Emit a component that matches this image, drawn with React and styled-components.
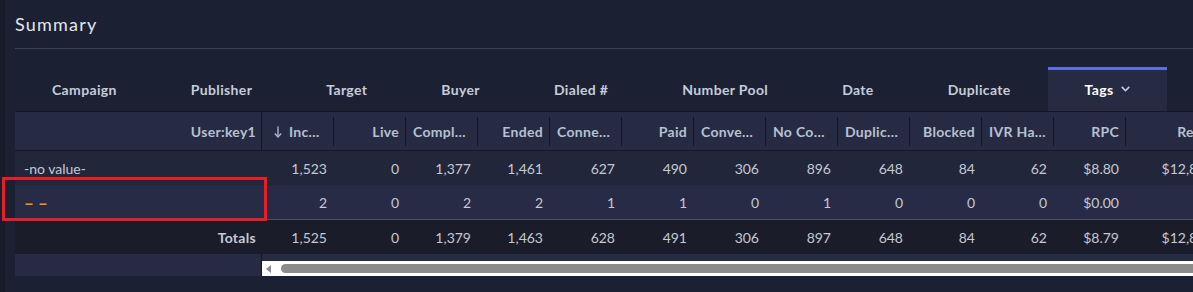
import React from 'react';
import styled, { createGlobalStyle } from 'styled-components';

const GlobalStyle = createGlobalStyle`
  html, body {
    margin: 0;
    padding: 0;
    background: #1c2033;
    overflow: hidden;
  }
  body {
    font-family: Lato, "Noto Sans", sans-serif;
    -webkit-font-smoothing: antialiased;
  }
`;

// layout
const Page = styled.div`
  position: relative;
  display: flex;
  width: 1193px;
  height: 292px;
  overflow: hidden;
  background: #1c2033;
`;

const Rail = styled.div`
  flex: 0 0 5px;
  background: #181b2a;
`;

const Main = styled.main`
  flex: 1;
  min-width: 0;
  padding-left: 10px;
`;

const Title = styled.h2`
  margin: 0;
  padding: 12px 0;
  height: 24px;
  line-height: 24px;
  font-size: 18px;
  font-weight: 400;
  letter-spacing: 1.2px;
  color: #e3e6ef;
  border-bottom: 1px solid #3a3f5d;
`;

// tabs
const Tabs = styled.nav`
  display: flex;
  margin-top: 18px;
  height: 44px;
`;

const Tab = styled.div`
  display: flex;
  align-items: center;
  gap: 7px;
  padding: 0 37px;
  font-size: 14px;
  font-weight: 700;
  letter-spacing: 0.35px;
  color: ${(p) => (p.$active ? '#ffffff' : '#c6ccd9')};
  background: ${(p) => (p.$active ? '#262a42' : 'transparent')};
  box-shadow: ${(p) => (p.$active ? 'inset 0 3px 0 #5b6fe0' : 'none')};
  white-space: nowrap;
`;

// table
const TableWrap = styled.div`
  overflow: hidden;
  border-top: 1px solid #141724;
`;

const Table = styled.div`
  width: max-content;
  font-size: 14px;
`;

const Row = styled.div`
  display: flex;
  height: ${(p) => p.$h || 34}px;
  background: ${(p) => p.$bg};
  border-top: ${(p) => (p.$topLine ? '1px solid #4a4f6c' : 'none')};
  border-bottom: ${(p) => (p.$bottomLine ? '1px solid #141724' : 'none')};
`;

const FrozenCell = styled.div`
  flex: 0 0 247px;
  box-sizing: border-box;
  display: flex;
  align-items: center;
  justify-content: ${(p) => (p.$right ? 'flex-end' : 'flex-start')};
  padding: 0 5px 0 9px;
  border-right: 1px solid ${(p) => (p.$divider ? '#141724' : 'transparent')};
  font-weight: ${(p) => (p.$bold ? 700 : 400)};
  letter-spacing: ${(p) => (p.$bold ? '0.3px' : '0')};
  color: ${(p) => p.$color || '#c5c9d4'};
  white-space: nowrap;
`;

const HeadCell = styled.div`
  flex: 0 0 ${(p) => p.$w}px;
  box-sizing: border-box;
  display: flex;
  align-items: center;
  justify-content: ${(p) => (p.$clip ? 'flex-start' : 'flex-end')};
  gap: 7px;
  margin: 5px 0 4px;
  padding: 0 6px 0 ${(p) => (p.$sorted ? 12 : 7)}px;
  border-right: 1px solid #13151f;
  font-weight: 700;
  letter-spacing: 0.3px;
  color: #b6c1d2;
  white-space: nowrap;
  overflow: hidden;
`;

const Cell = styled.div`
  flex: 0 0 ${(p) => p.$w}px;
  box-sizing: border-box;
  display: flex;
  align-items: center;
  justify-content: flex-end;
  padding-right: 7px;
  color: #c5c9d4;
  white-space: nowrap;
`;

const Dashes = styled.span`
  font-size: 17px;
  font-weight: 700;
  line-height: 1;
  color: #f7921c;
`;

const Track = styled.div`
  flex: 1;
  display: flex;
  align-items: center;
  margin-top: 7px;
  height: 15px;
  background: #ffffff;
`;

const TrackArrow = styled.span`
  margin-left: 4px;
  width: 0;
  height: 0;
  border-top: 4px solid transparent;
  border-bottom: 4px solid transparent;
  border-right: 5px solid #8b8b8b;
`;

const Thumb = styled.div`
  flex: 1;
  margin-left: 10px;
  height: 9px;
  border-radius: 5px 0 0 5px;
  background: #8b8b8b;
`;

const Annotation = styled.div`
  position: absolute;
  left: 2px;
  top: 177px;
  width: 265px;
  height: 44px;
  box-sizing: border-box;
  border: 3px solid #e61e28;
  pointer-events: none;
`;

const SortDown = () => (
  <svg width="8" height="12" viewBox="0 0 8 12" fill="none" stroke="#a9b7cc" strokeWidth="1.4">
    <path d="M4 0.5V11" />
    <path d="M0.8 7.6L4 11L7.2 7.6" />
  </svg>
);

const Chevron = () => (
  <svg width="9" height="6" viewBox="0 0 9 6" fill="none" stroke="#c2d0ea" strokeWidth="1.6">
    <path d="M0.8 0.9L4.5 4.7L8.2 0.9" />
  </svg>
);

const tabs = ['Campaign', 'Publisher', 'Target', 'Buyer', 'Dialed #', 'Number Pool', 'Date', 'Duplicate', 'Tags'];

const columns = [
  { label: 'Inc…', sorted: true, clip: true },
  { label: 'Live' },
  { label: 'Compl…', clip: true },
  { label: 'Ended' },
  { label: 'Conne…', clip: true },
  { label: 'Paid' },
  { label: 'Conve…', clip: true },
  { label: 'No Co…', clip: true },
  { label: 'Duplic…', clip: true },
  { label: 'Blocked' },
  { label: 'IVR Ha…', clip: true },
  { label: 'RPC' },
  { label: 'Revenue', w: 114 }
];

const rows = [
  {
    name: '-no value-',
    bg: '#22263b',
    values: ['1,523', '0', '1,377', '1,461', '627', '490', '306', '896', '648', '84', '62', '$8.80', '$12,858.00']
  },
  {
    name: null,
    bg: '#272b45',
    values: ['2', '0', '2', '2', '1', '1', '0', '1', '0', '0', '0', '$0.00', '']
  }
];

const totals = ['1,525', '0', '1,379', '1,463', '628', '491', '306', '897', '648', '84', '62', '$8.79', '$12,858.00'];

const App = () => {
  return (
    <>
      <GlobalStyle />
      <Page>
        <Rail />
        <Main>
          <Title>Summary</Title>
          <Tabs>
            {tabs.map((t) => (
              <Tab key={t} $active={t === 'Tags'}>
                {t}
                {t === 'Tags' && <Chevron />}
              </Tab>
            ))}
          </Tabs>
          <TableWrap>
            <Table>
              <Row $h={38} $bg="#262a42" $bottomLine>
                <FrozenCell $right $bold $divider $color="#b6c1d2">
                  User:key1
                </FrozenCell>
                {columns.map((c) => (
                  <HeadCell key={c.label} $w={c.w || 72} $clip={c.clip} $sorted={c.sorted}>
                    {c.sorted && <SortDown />}
                    {c.label}
                  </HeadCell>
                ))}
              </Row>
              {rows.map((r, i) => (
                <Row key={i} $bg={r.bg}>
                  <FrozenCell>{r.name ? r.name : <Dashes>– –</Dashes>}</FrozenCell>
                  {r.values.map((v, j) => (
                    <Cell key={j} $w={columns[j].w || 72}>
                      {v}
                    </Cell>
                  ))}
                </Row>
              ))}
              <Row $bg="#1a1c2a" $topLine>
                <FrozenCell $right $bold>
                  Totals
                </FrozenCell>
                {totals.map((v, j) => (
                  <Cell key={j} $w={columns[j].w || 72}>
                    {v}
                  </Cell>
                ))}
              </Row>
              <Row $h={22} $bg="#262a42">
                <FrozenCell $divider />
                <Track>
                  <TrackArrow />
                  <Thumb />
                </Track>
              </Row>
            </Table>
          </TableWrap>
        </Main>
        <Annotation />
      </Page>
    </>
  );
};

export default App;
